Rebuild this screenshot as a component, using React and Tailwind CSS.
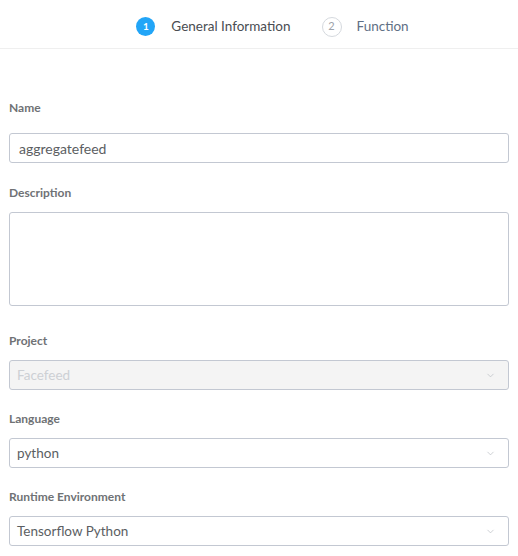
import { ChevronDown } from 'lucide-react';

function Label({ children }) {
  return <div className="text-[12px] font-bold text-[#6f7275] leading-[14px]">{children}</div>;
}

function Select({ value, disabled }) {
  return (
    <div
      className={`flex items-center justify-between h-[30px] rounded-[3px] border border-[#c3c8d2] pl-[7px] pr-[12px] text-[13.5px] ${
        disabled ? 'bg-[#f4f4f4] text-[#cdd0d4]' : 'bg-white text-[#5b5e62]'
      }`}
    >
      <span>{value}</span>
      <ChevronDown size={11} strokeWidth={1.5} className="text-[#b8bcc2]" />
    </div>
  );
}

export default function App() {
  return (
    <div className="w-[518px] h-[556px] bg-white font-['Lato',sans-serif] overflow-hidden">
      <div className="h-[49px] border-b border-[#efefef] flex items-center justify-center gap-[31px] pl-[27px] pt-[5px]">
        <div className="flex items-center gap-[16px]">
          <div className="w-[19px] h-[19px] rounded-full bg-[#22a5f7] text-white text-[10px] font-bold flex items-center justify-center">
            1
          </div>
          <span className="text-[13.5px] text-[#4a4d52]">General Information</span>
        </div>
        <div className="flex items-center gap-[15px]">
          <div className="w-[20px] h-[20px] rounded-full border border-[#d5d9de] text-[#9da3aa] text-[11px] flex items-center justify-center">
            2
          </div>
          <span className="text-[13.5px] text-[#5f6f85]">Function</span>
        </div>
      </div>

      <div className="px-[9px] pt-[52px]">
        <Label>Name</Label>
        <div className="mt-[18px] h-[30px] rounded-[3px] border border-[#c3c8d2] flex items-center pl-[9px] text-[14px] text-[#5b5e62]">
          aggregatefeed
        </div>

        <div className="mt-[23px]">
          <Label>Description</Label>
        </div>
        <div className="mt-[12px] h-[94px] rounded-[3px] border border-[#c3c8d2]" />

        <div className="mt-[28px]">
          <Label>Project</Label>
        </div>
        <div className="mt-[12px]">
          <Select value="Facefeed" disabled />
        </div>

        <div className="mt-[22px]">
          <Label>Language</Label>
        </div>
        <div className="mt-[12px]">
          <Select value="python" />
        </div>

        <div className="mt-[22px]">
          <Label>Runtime Environment</Label>
        </div>
        <div className="mt-[12px]">
          <Select value="Tensorflow Python" />
        </div>
      </div>
    </div>
  );
}
